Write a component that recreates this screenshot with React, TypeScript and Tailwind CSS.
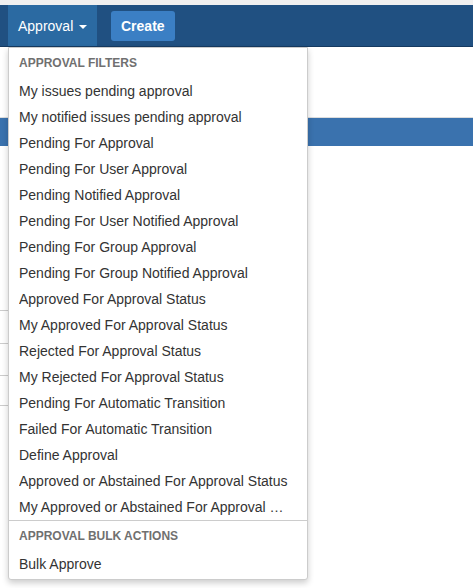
const filters = [
  "My issues pending approval",
  "My notified issues pending approval",
  "Pending For Approval",
  "Pending For User Approval",
  "Pending Notified Approval",
  "Pending For User Notified Approval",
  "Pending For Group Approval",
  "Pending For Group Notified Approval",
  "Approved For Approval Status",
  "My Approved For Approval Status",
  "Rejected For Approval Status",
  "My Rejected For Approval Status",
  "Pending For Automatic Transition",
  "Failed For Automatic Transition",
  "Define Approval",
  "Approved or Abstained For Approval Status",
];

function MenuItem({ label, tight }: { label: string; tight?: boolean }) {
  return (
    <div
      className={`h-[26px] flex items-center pl-[10px] text-[14px] text-[#333333] ${
        tight ? "pr-[22px]" : "pr-[8px]"
      }`}
    >
      <span className="truncate">{label}</span>
    </div>
  );
}

function MenuHeading({ label }: { label: string }) {
  return (
    <div className="h-[30px] flex items-center pl-[10px] text-[12px] font-bold uppercase text-[#707070]">
      {label}
    </div>
  );
}

export default function App() {
  return (
    <div className="relative h-[588px] w-[473px] overflow-hidden bg-white font-['Liberation_Sans',Arial,sans-serif]">
      {/* Top strip */}
      <div className="h-[5px] bg-[#f0f0f0]" />

      {/* Header bar */}
      <nav className="h-[42px] flex items-stretch bg-[#205081] border-b border-[#153a61] pl-[8px]">
        <button className="w-[89px] flex items-center gap-[6px] bg-[#2b6aa2] pl-[10px] pt-[2px] text-[14px] text-white">
          Approval
          <svg width="8" height="4" viewBox="0 0 8 4">
            <path d="M0 0 L8 0 L4 4 Z" fill="white" />
          </svg>
        </button>
        <div className="flex items-center pl-[14px]">
          <button className="h-[30px] px-[10px] pt-[1px] rounded-[3px] bg-[#3b7fc4] text-[14px] font-bold text-white">
            Create
          </button>
        </div>
      </nav>

      {/* Page content behind the menu */}
      <div className="h-[70px]" />
      <div className="h-[29px] border-t border-[#dddddd] bg-[#3a72ae]" />
      <div className="h-[132px]" />
      <div className="w-[30px] h-[33px] border-b border-[#cccccc]" />
      <div className="w-[30px] h-[33px] border-b border-[#cccccc]" />
      <div className="w-[30px] h-[32px] border-b border-[#cccccc]" />
      <div className="w-[30px] h-[30px] border-b border-[#cccccc]" />

      {/* Dropdown menu */}
      <div className="absolute left-[8px] top-[47px] w-[300px] rounded-b-[3px] border border-[#cccccc] bg-white pb-[2px] shadow-[0_3px_6px_rgba(0,0,0,0.2)]">
        <MenuHeading label="Approval Filters" />
        {filters.map((f) => (
          <MenuItem key={f} label={f} />
        ))}
        <MenuItem label="My Approved or Abstained For Approval Status" tight />
        <div className="border-t border-[#cccccc]" />
        <MenuHeading label="Approval Bulk Actions" />
        <MenuItem label="Bulk Approve" />
      </div>
    </div>
  );
}
